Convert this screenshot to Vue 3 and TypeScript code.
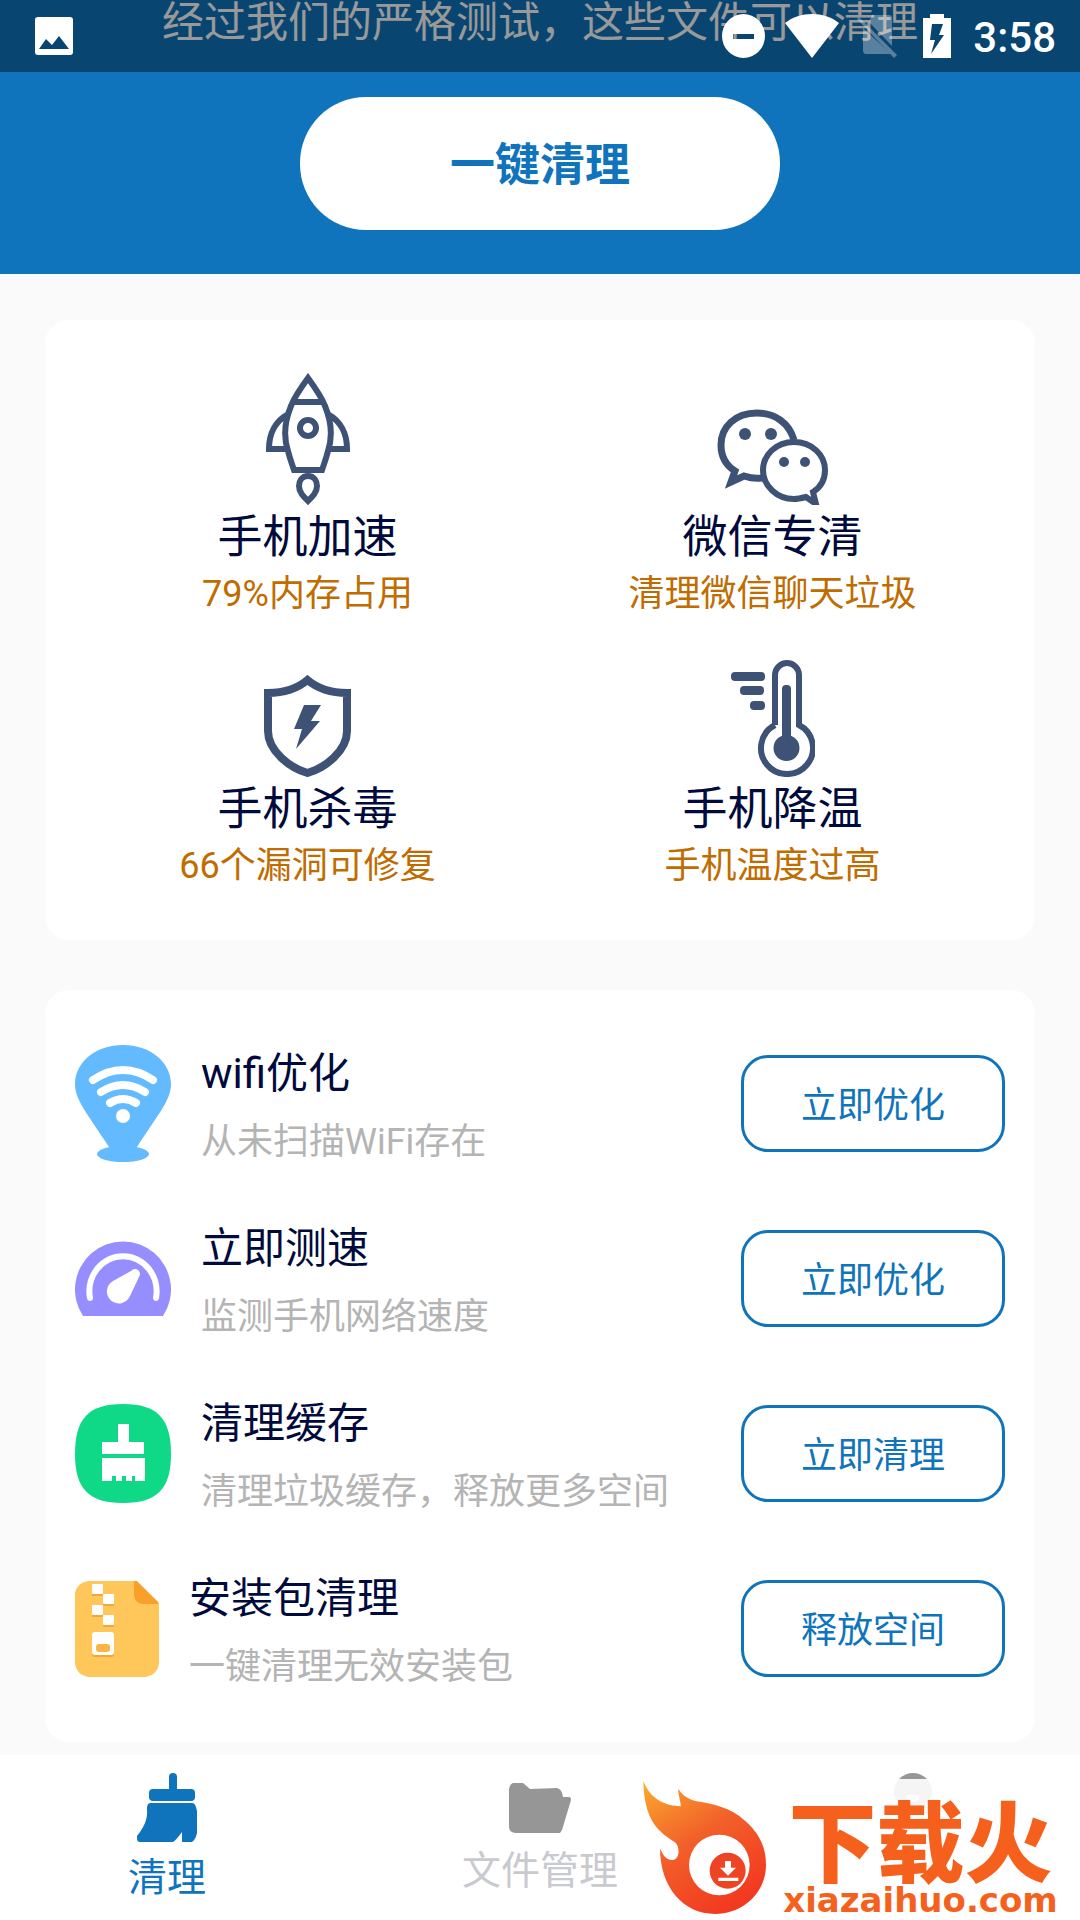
<script setup lang="ts">
type ToolIcon = 'rocket' | 'chat' | 'shield' | 'thermometer'
type TaskIcon = 'wifi' | 'speed' | 'brush' | 'zip'

interface Tool {
  icon: ToolIcon
  title: string
  note: string
}

interface Task {
  icon: TaskIcon
  title: string
  note: string
  action: string
}

const tools: Tool[] = [
  { icon: 'rocket', title: '手机加速', note: '79%内存占用' },
  { icon: 'chat', title: '微信专清', note: '清理微信聊天垃圾' },
  { icon: 'shield', title: '手机杀毒', note: '66个漏洞可修复' },
  { icon: 'thermometer', title: '手机降温', note: '手机温度过高' },
]

const tasks: Task[] = [
  { icon: 'wifi', title: 'wifi优化', note: '从未扫描WiFi存在', action: '立即优化' },
  { icon: 'speed', title: '立即测速', note: '监测手机网络速度', action: '立即优化' },
  { icon: 'brush', title: '清理缓存', note: '清理垃圾缓存，释放更多空间', action: '立即清理' },
  { icon: 'zip', title: '安装包清理', note: '一键清理无效安装包', action: '释放空间' },
]
</script>

<template>
  <div class="page">
    <div class="status-bar">
      <svg class="status-photo" width="38" height="38" viewBox="0 0 38 38">
        <path fill="#fff" fill-rule="evenodd" d="M3 0H35Q38 0 38 3V35Q38 38 35 38H3Q0 38 0 35V3Q0 0 3 0ZM4 32H34L24 19L17 28L11 22Z" />
      </svg>
      <svg class="status-dnd" width="43" height="44" viewBox="0 0 43 44">
        <path fill="#fff" fill-rule="evenodd" d="M21.500 0A21.500 22 0 1 1 21.500 44A21.500 22 0 1 1 21.500 0ZM11 20V25H32V20Z" />
      </svg>
      <svg class="status-wifi" width="54" height="44" viewBox="0 0 54 44">
        <path fill="#fff" d="M0 9C15 -3 39 -3 54 9L27 44Z" />
      </svg>
      <svg class="status-sim" width="40" height="44" viewBox="0 0 40 44">
        <g fill="#fff" opacity="0.32">
          <path d="M15 1H32Q35 1 35 4V32L12 8ZM6 14L34 40H9Q6 40 6 36Z" />
          <path d="M0 5L2 3L40 41L37 44Z" />
        </g>
      </svg>
      <svg class="status-battery" width="28" height="44" viewBox="0 0 28 44">
        <path fill="#fff" fill-rule="evenodd" d="M7 0H21V4H28V44H0V4H7ZM9 10L7 26H12L8 40L21 21H16L20 10Z" />
      </svg>
      <time class="clock">3:58</time>
    </div>

    <header class="hero">
      <p class="hero-text">经过我们的严格测试，这些文件可以清理</p>
      <button class="clean-button" type="button">一键清理</button>
    </header>

    <main class="content">
      <section class="card tools">
        <div v-for="tool in tools" :key="tool.icon" class="tool">
          <div class="tool-icon">
            <svg v-if="tool.icon === 'rocket'" width="84" height="132" viewBox="0 0 84 132" fill="none" stroke="#3e5276" stroke-width="6">
              <path d="M42 5C34 16 28 25 25 33C18 50 18 66 22 78C24 86 26 91 28 97H56C58 91 60 86 62 78C66 66 66 50 59 33C56 25 50 16 42 5Z" />
              <path d="M26 29H58M21 42C10 48 3 60 3 76H21M63 42C74 48 81 60 81 76H63" />
              <circle cx="42" cy="55" r="8" />
              <path d="M42 103C36 103 33 108 33 113C33 119 37 123 42 128C47 123 51 119 51 113C51 108 48 103 42 103Z" />
            </svg>
            <svg v-else-if="tool.icon === 'chat'" width="111" height="96" viewBox="0 0 111 96" fill="none" stroke="#3e5276">
              <path stroke-width="7" d="M77 31C72 14 58 4 40 4C18 4 4 18 4 36C4 48 10 57 18 62L14 73L27 67C33 69 38 70 45 69" />
              <path stroke-width="6" d="M77 33C59 33 46 46 46 61C46 77 60 90 77 90C81 90 85 89 89 88L99 95L96 83C104 78 108 70 108 61C108 46 95 33 77 33Z" />
              <g fill="#3e5276" stroke="none">
                <circle cx="28" cy="25" r="6" />
                <circle cx="54" cy="25" r="6" />
                <circle cx="67" cy="53" r="5" />
                <circle cx="88" cy="53" r="5" />
              </g>
            </svg>
            <svg v-else-if="tool.icon === 'shield'" width="87" height="102" viewBox="0 0 87 102" fill="none">
              <path stroke="#3e5276" stroke-width="8" d="M43.500 5C34 13 20 18 4 18V56C4 76 26 93 43.500 98C61 93 83 76 83 56V18C67 18 53 13 43.500 5Z" />
              <path fill="#3e5276" d="M40 30H57L47 46H56L32 74L38 54H30Z" />
            </svg>
            <svg v-else width="84" height="117" viewBox="0 0 84 117" fill="none">
              <path stroke="#3e5276" stroke-width="6" d="M44 65V15A12 12 0 0 1 68 15V65A26 26 0 1 1 44 65" />
              <g fill="#3e5276">
                <rect x="51" y="25" width="9" height="60" rx="4" />
                <circle cx="55.500" cy="88" r="13" />
                <rect x="0" y="12" width="34" height="9" rx="4" />
                <rect x="9" y="26" width="24" height="9" rx="4" />
                <rect x="19" y="41" width="15" height="9" rx="4" />
              </g>
            </svg>
          </div>
          <h2 class="tool-title">{{ tool.title }}</h2>
          <p class="tool-note">{{ tool.note }}</p>
        </div>
      </section>

      <section class="card tasks">
        <div v-for="task in tasks" :key="task.icon" class="task">
          <svg v-if="task.icon === 'wifi'" class="task-icon" width="96" height="117" viewBox="0 0 96 117">
            <g fill="#64baff">
              <path d="M48 0C21 0 0 17 0 39C0 55 12 68 34 102H62C84 68 96 55 96 39C96 17 75 0 48 0Z" />
              <ellipse cx="48" cy="109" rx="26" ry="8" />
            </g>
            <path fill="none" stroke="#fff" stroke-width="8" stroke-linecap="round" d="M18 35Q48 15 78 35M26 47Q48 33 70 47M35 58Q48 50 61 58" />
            <circle cx="48" cy="71" r="7" fill="#fff" />
          </svg>
          <svg v-else-if="task.icon === 'speed'" class="task-icon" width="96" height="75" viewBox="0 0 96 75">
            <path fill="#968eff" d="M8 75A48 48 0 1 1 88 75Z" />
            <path fill="none" stroke="#fff" stroke-width="6" stroke-linecap="round" d="M15 57C13 46 16 36 22 28C36 11 60 11 74 28C80 36 83 46 81 57" />
            <path fill="#fff" d="M56 30A5 5 0 0 1 64 36L55 55A12 12 0 1 1 38 40Z" />
          </svg>
          <svg v-else-if="task.icon === 'brush'" class="task-icon" width="96" height="99" viewBox="0 0 96 99">
            <path fill="#0fd986" d="M48 0C83 0 96 15 96 50C96 84 83 99 48 99C13 99 0 84 0 50C0 15 13 0 48 0Z" />
            <path fill="#fff" d="M43 20H54V38H69V50H27V38H43ZM27 54H70V77H60V72H57V77H51V72H47V77H41V72H37V77H27Z" />
          </svg>
          <svg v-else class="task-icon" width="84" height="96" viewBox="0 0 84 96">
            <path fill="#ffc65a" d="M13 0H61L84 22V83Q82 94 71 96H13Q2 94 0 83V12Q2 2 13 0Z" />
            <path fill="#f8a02c" d="M59 0H62L83 21V23H67Q60 22 59 14Z" />
            <g fill="#f3a63a">
              <rect x="17" y="5" width="11" height="10" rx="1" />
              <rect x="28" y="15" width="11" height="10" rx="1" />
              <rect x="17" y="26" width="11" height="10" rx="1" />
              <rect x="28" y="36" width="11" height="10" rx="1" />
              <rect x="17" y="53" width="22" height="23" rx="3" />
            </g>
            <g fill="#fff">
              <rect x="17" y="3" width="11" height="10" rx="1" />
              <rect x="28" y="13" width="11" height="10" rx="1" />
              <rect x="17" y="24" width="11" height="10" rx="1" />
              <rect x="28" y="34" width="11" height="10" rx="1" />
              <rect x="17" y="51" width="22" height="23" rx="3" />
            </g>
            <rect x="21" y="63" width="14" height="8" rx="3" fill="#fbb545" />
          </svg>
          <div class="task-text">
            <h2 class="task-title">{{ task.title }}</h2>
            <p class="task-note">{{ task.note }}</p>
          </div>
          <button class="task-button" type="button">{{ task.action }}</button>
        </div>
      </section>
    </main>

    <nav class="tab-bar">
      <button class="tab tab-active" type="button">
        <svg width="60" height="69" viewBox="0 0 60 69" fill="#1074bc">
          <path d="M32 18V4Q32 0 36 0T40 4V18Z" />
          <rect x="12" y="16" width="46" height="12" rx="4" />
          <path d="M14 30H55C58 30 59 33 60 38V60C59 64 58 67 55 69H45V59C42 63 39 67 36 69H3C0 69 0 66 0 63C7 54 11 46 10 36C10 32 11 30 14 30Z" />
        </svg>
        <span class="tab-label">清理</span>
      </button>
      <button class="tab tab-files" type="button">
        <svg width="62" height="50" viewBox="0 0 62 50" fill="#969696">
          <path d="M4 0H14L21 6L48 5Q53 6 54 14H60Q62 14 62 17L53 47L51 50H6Q0 49 0 44V6Q1 1 4 0Z" />
        </svg>
        <span class="tab-label">文件管理</span>
      </button>
      <button class="tab" type="button" aria-label="我的">
        <svg width="60" height="69" viewBox="0 0 60 69">
          <circle cx="30" cy="19" r="19" fill="#969696" />
          <path fill="#fff" d="M23 22H37Q36 29 30 29T23 22Z" />
        </svg>
      </button>
      <a class="site-badge" href="#">
        <svg width="128" height="136" viewBox="60 60 384 408">
          <defs>
            <linearGradient id="flame" x1="0" y1="0" x2="0.600" y2="1">
              <stop offset="0" stop-color="#fbab2c" />
              <stop offset="0.500" stop-color="#f2602a" />
              <stop offset="1" stop-color="#f23a20" />
            </linearGradient>
          </defs>
          <path fill="url(#flame)" d="M70 65C85 105 115 138 182 142C183 125 173 108 175 90C190 112 205 120 230 127C280 135 330 145 375 185C415 220 438 260 438 318C438 400 370 465 285 465C190 465 120 385 120 268C128 285 135 303 158 303C178 303 182 265 165 250C120 220 72 190 70 65Z" />
          <circle cx="298" cy="318" r="91" fill="#fff" />
          <circle cx="323" cy="335" r="54" fill="#ee4423" />
          <path fill="#fff" d="M315 306H333V326H348L324 350L300 326H315ZM295 356H355V366H295Z" />
        </svg>
        <span class="badge-text">
          <span class="badge-name">下载火</span>
          <span class="badge-site">xiazaihuo.com</span>
        </span>
      </a>
    </nav>
  </div>
</template>

<style>
body {
  margin: 0;
  background: #fafafa;
}
</style>

<style scoped>
.page {
  position: relative;
  display: flex;
  flex-direction: column;
  min-height: 100vh;
  overflow: hidden;
  background: #fafafa;
  font-family: Roboto, "Noto Sans CJK SC", sans-serif;
}

h2,
p {
  margin: 0;
  font-weight: 400;
}

button {
  margin: 0;
  padding: 0;
  border: 0;
  background: none;
  font: inherit;
}

svg {
  display: block;
  flex: none;
}

.status-bar {
  position: absolute;
  z-index: 2;
  top: 0;
  left: 0;
  right: 0;
  display: flex;
  align-items: center;
  box-sizing: border-box;
  height: 72px;
  padding: 0 24px 0 35px;
  background: rgba(0, 0, 0, 0.4);
}

.status-photo {
  margin-right: auto;
}

.status-wifi {
  margin-left: 20px;
}

.status-sim {
  margin-left: 18px;
}

.status-battery {
  margin: 0 22px 0 26px;
}

.clock {
  padding-top: 4px;
  color: #fff;
  font-size: 42px;
  font-weight: 500;
  line-height: 48px;
}

.hero {
  display: flex;
  flex-direction: column;
  align-items: center;
  gap: 51px;
  padding-bottom: 44px;
  background: #1074bc;
}

.hero-text {
  color: #fff;
  font-size: 42px;
  line-height: 46px;
  white-space: nowrap;
}

.clean-button {
  width: 480px;
  height: 133px;
  padding-bottom: 4px;
  border-radius: 66px;
  background: #fff;
  color: #1074bc;
  font-size: 45px;
  font-weight: 700;
}

.content {
  display: flex;
  flex-direction: column;
  gap: 50px;
  padding: 46px 45px 12px;
}

.card {
  border-radius: 24px;
  background: #fff;
}

.tools {
  display: grid;
  grid-template-columns: 1fr 1fr;
  padding: 25px 30px 51px;
}

.tool {
  display: flex;
  flex-direction: column;
  align-items: center;
}

.tool-icon {
  display: flex;
  align-items: flex-end;
  height: 160px;
}

.tool-title {
  color: #000a3c;
  font-size: 45px;
  line-height: 66px;
}

.tool-note {
  color: #c06c00;
  font-size: 36px;
  line-height: 46px;
}

.tasks {
  padding: 26px 30px;
}

.task {
  display: flex;
  align-items: center;
  height: 175px;
}

.task-text {
  display: flex;
  flex: 1;
  flex-direction: column;
  gap: 16px;
  margin-left: 30px;
  padding-top: 4px;
}

.task-title {
  color: #000a3c;
  font-size: 42px;
  line-height: 56px;
}

.task-note {
  color: #b4b4b4;
  font-size: 36px;
  line-height: 48px;
}

.task-button {
  box-sizing: border-box;
  width: 264px;
  height: 97px;
  padding-bottom: 4px;
  border: 3px solid #1074bc;
  border-radius: 27px;
  color: #1074bc;
  font-size: 36px;
}

.tab-bar {
  position: relative;
  display: grid;
  grid-template-columns: 334fr 412fr 334fr;
  height: 165px;
  margin-top: auto;
  background: #fff;
}

.tab {
  display: flex;
  flex-direction: column;
  align-items: center;
  gap: 12px;
  padding-top: 18px;
  color: #c8cacf;
  font-size: 39px;
  line-height: 48px;
}

.tab-active {
  color: #1074bc;
}

.tab-files {
  gap: 14px;
  padding-top: 28px;
}

.site-badge {
  position: absolute;
  right: 7px;
  bottom: 0;
  display: flex;
  align-items: flex-start;
  box-sizing: border-box;
  width: 436px;
  height: 141px;
  padding: 0 0 0 3px;
  background: rgba(255, 255, 255, 0.9);
  color: #f5611c;
  text-decoration: none;
}

.badge-text {
  display: flex;
  flex: 1;
  flex-direction: column;
  align-items: center;
  padding-top: 26px;
}

.badge-name {
  font-size: 88px;
  font-weight: 900;
  line-height: 80px;
}

.badge-site {
  font-family: "DejaVu Sans", sans-serif;
  font-size: 34px;
  font-weight: 700;
  line-height: 30px;
}
</style>
